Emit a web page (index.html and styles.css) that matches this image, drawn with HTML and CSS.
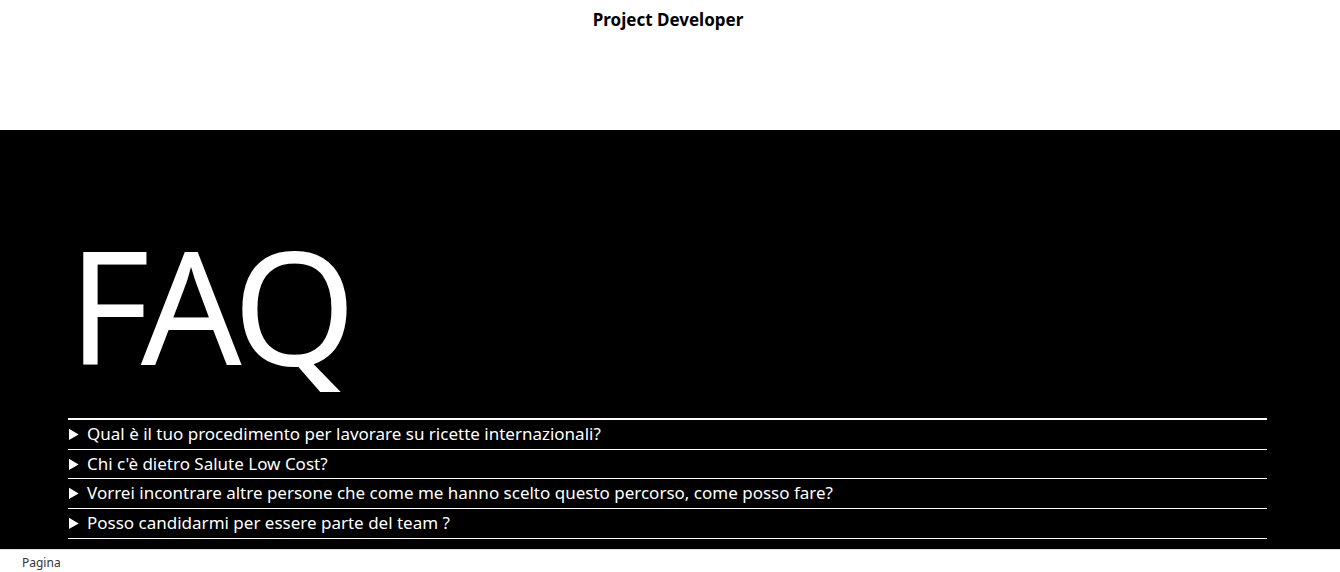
FILE: index.html
```html
<!DOCTYPE html>
<html lang="it">
<head>
<meta charset="utf-8">
<title>FAQ</title>
<link rel="stylesheet" href="styles.css">
</head>
<body>
<header class="site-header">
  <div class="site-title">Project Developer</div>
</header>
<main class="faq">
  <h1 class="faq-title">FAQ</h1>
  <div class="faq-list">
    <details class="faq-item"><summary>Qual è il tuo procedimento per lavorare su ricette internazionali?</summary></details>
    <details class="faq-item"><summary>Chi c'è dietro Salute Low Cost?</summary></details>
    <details class="faq-item"><summary>Vorrei incontrare altre persone che come me hanno scelto questo percorso, come posso fare?</summary></details>
    <details class="faq-item"><summary>Posso candidarmi per essere parte del team ?</summary></details>
  </div>
</main>
<footer class="site-footer">Pagina</footer>
</body>
</html>
```

FILE: styles.css
```css
html, body {
  margin: 0;
  padding: 0;
}
body {
  font-family: "Noto Sans", "Open Sans", sans-serif;
  background: #fff;
  color: #000;
}
.site-header {
  height: 130px;
  display: flex;
  justify-content: center;
}
.site-title {
  font-weight: bold;
  font-size: 17px;
  padding-top: 8px;
  margin-right: 4px;
}
.faq {
  background: #000;
  color: #fff;
  padding: 0 73px 10px 68px;
  display: flex;
  flex-direction: column;
}
.faq-title {
  margin: 0;
  padding-top: 73px;
  padding-bottom: 13px;
  font-weight: normal;
  font-size: 158px;
  letter-spacing: -6px;
  line-height: 202px;
  height: 202px;
}
.faq-list {
  border-top: 2px solid #fff;
}
.faq-item {
  border-bottom: 1px solid #fff;
}
.faq-item summary {
  font-size: 17px;
  line-height: 28.7px;
  cursor: pointer;
  padding-left: 1px;
}
.site-footer {
  border-top: 1px solid #e0e0e0;
  font-size: 12px;
  color: #333;
  padding: 4px 22px;
}
```
